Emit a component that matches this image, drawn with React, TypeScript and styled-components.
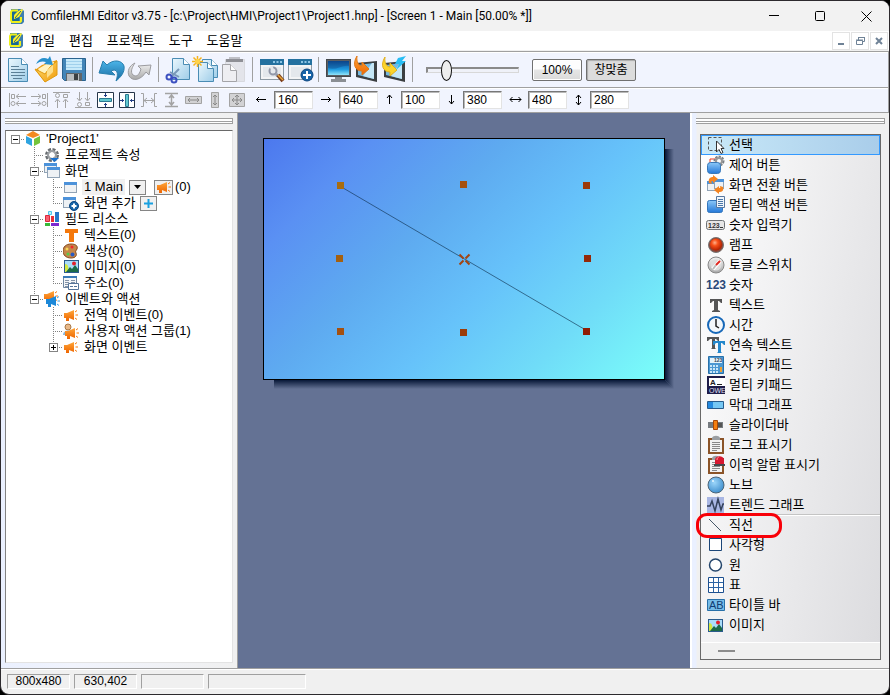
import React, { ReactNode } from 'react';
import styled, { createGlobalStyle, css } from 'styled-components';

const uiFont = '"Liberation Sans", "Noto Sans CJK KR", sans-serif';

const GlobalStyle = createGlobalStyle`
  *, *::before, *::after { box-sizing: border-box; }
  body { margin: 0; background: #000; }
  button, input { font: inherit; color: inherit; }
  button { padding: 0; border: 0; background: none; }
  ul { list-style: none; margin: 0; padding: 0; }
  svg { display: block; flex: none; }
`;

const Window = styled.div`
  height: 100vh;
  min-height: 600px;
  display: flex;
  flex-direction: column;
  border: 1px solid #2d2a2e;
  border-radius: 9px;
  overflow: hidden;
  background: #f0f0f0;
  color: #000;
  font: 13px/16px ${uiFont};
  white-space: nowrap;
`;

const TitleBar = styled.header`
  display: flex;
  align-items: center;
  height: 30px;
  flex: none;
  padding-left: 7px;
  background: #f2f2f2;
`;

const Title = styled.h1`
  flex: 1;
  min-width: 0;
  overflow: hidden;
  margin: 0 0 0 6px;
  font: 400 12px/18px Roboto, "Open Sans", sans-serif;
`;

const CaptionButton = styled.button`
  width: 46px;
  height: 30px;
  display: grid;
  place-items: center;
`;

const MenuBar = styled.nav`
  display: flex;
  align-items: center;
  height: 20px;
  flex: none;
  padding-left: 6px;
  background: #fff;
  border-bottom: 1px solid #f0f0f0;
`;

const MenuList = styled.div`
  display: flex;
  flex: 1;
  gap: 14px;
  margin-left: 7px;
`;

const MdiButton = styled.button`
  width: 18px;
  height: 18px;
  margin-right: 1px;
  display: grid;
  place-items: center;
  border: 1px solid #e3e3e3;
`;

const ToolRow = styled.div<{ $height: number; $pad: number }>`
  display: flex;
  align-items: center;
  height: ${(p) => p.$height}px;
  flex: none;
  padding-left: ${(p) => p.$pad}px;
  background: #f1f4fe;
  border-top: 1px solid #a0a0a0;
  border-right: 1px solid #a0a0a0;
  box-shadow: inset 0 1px #fff;
`;

const ToolButton = styled.button<{ $size: number }>`
  width: ${(p) => p.$size}px;
  height: ${(p) => p.$size}px;
  display: grid;
  place-items: center;
`;

const Separator = styled.span`
  width: 10px;
  height: 25px;
  display: flex;
  padding-left: 4px;
  &::before { content: ''; width: 1px; background: #a0a0a0; }
`;

const ZoomSlider = styled.input`
  appearance: none;
  width: 93px;
  height: 22px;
  margin: 0 13px 0 8px;
  background: none;
  &::-webkit-slider-runnable-track {
    height: 6px;
    background: #eff1f8;
    border: 1px solid;
    border-width: 2px 1px 1px 2px;
    border-color: #8a8a8a #d8d8d8 #d8d8d8 #8a8a8a;
  }
  &::-webkit-slider-thumb {
    appearance: none;
    width: 11px;
    height: 21px;
    margin-top: -9px;
    background: #eee;
    border: 1px solid #111;
    border-radius: 50%;
  }
`;

const PushButton = styled.button<{ $pressed?: boolean }>`
  width: 50px;
  height: 22px;
  margin-right: 4px;
  border: 1px solid #707070;
  border-radius: 2px;
  font-size: 12px;
  line-height: 18px;
  background: ${(p) => (p.$pressed ? '#dcdcdc' : 'linear-gradient(#fdfdfd 45%, #e6e6e6 50%, #dadada)')};
  box-shadow: ${(p) => (p.$pressed ? 'inset 1px 1px 1px #aaa' : 'inset 0 0 0 1px #fff')};
`;

const Field = styled.label<{ $wide?: boolean }>`
  display: flex;
  align-items: center;
  span {
    width: ${(p) => (p.$wide ? 26 : 23)}px;
    display: grid;
    place-items: center;
  }
`;

const NumberInput = styled.input`
  width: 39px;
  height: 18px;
  padding: 0 0 0 3px;
  border: 1px solid;
  border-color: #777 #e3e3e3 #e3e3e3 #777;
  box-shadow: inset 1px 1px #b8b8b8;
  background: #fff;
  font-size: 12px;
  outline: 0;
`;

const Workspace = styled.main`
  flex: 1;
  min-height: 0;
  display: grid;
  grid-template-columns: 237px minmax(0, 1fr) 199px;
  border-top: 1px solid #a0a0a0;
`;

const SidePanel = styled.aside<{ $right?: boolean }>`
  display: flex;
  flex-direction: column;
  min-height: 0;
  background: linear-gradient(90deg, #eaf0ff, #f1f4fd 30%, #f0f0f0);
  ${(p) => p.$right
    ? css`padding: 5px 8px 8px 8px; border-left: 2px solid #fff; background: linear-gradient(90deg, #eaf0ff 4px, #f0f0f0 5px);`
    : css`padding: 5px 4px 5px 4px; border-right: 1px solid #a0a0a0;`}
`;

const Gripper = styled.div<{ $wide?: boolean }>`
  height: 6px;
  flex: none;
  margin: ${(p) => (p.$wide ? '0 -4px 10px -4px' : '0 0 6px')};
  border: solid #a0a0a0;
  border-width: 1px 1px 1px 0;
  background: linear-gradient(#fff 2px, #a0a0a0 2px, #a0a0a0 3px, #fff 3px);
`;

const Tree = styled.ul`
  flex: 1;
  min-height: 0;
  overflow: hidden;
  background: #fff;
  border: 1px solid;
  border-color: #696969 #e3e3e3 #e3e3e3 #828282;
`;

const TreeRow = styled.li`
  display: flex;
  align-items: center;
  height: 16px;
`;

const dotsV = 'repeating-linear-gradient(#808080 0 1px, transparent 1px 2px)';
const dotsH = 'repeating-linear-gradient(90deg, #808080 0 1px, transparent 1px 2px)';

const Guide = styled.span<{ $kind: string }>`
  width: 19px;
  height: 16px;
  flex: none;
  display: grid;
  place-items: center;
  background-repeat: no-repeat;
  ${(p) => p.$kind === 'line' && css`background-image: ${dotsV}; background-size: 1px 16px; background-position: 9px 0;`}
  ${(p) => p.$kind === 'tee' && css`background-image: ${dotsV}, ${dotsH}; background-size: 1px 16px, 10px 1px; background-position: 9px 0, 9px 8px;`}
  ${(p) => p.$kind === 'end' && css`background-image: ${dotsV}, ${dotsH}; background-size: 1px 8px, 10px 1px; background-position: 9px 0, 9px 8px;`}
  ${(p) => p.$kind === 'root' && css`background-image: ${dotsH}; background-size: 10px 1px; background-position: 9px 8px;`}
`;

const Expander = styled.button<{ $open: boolean }>`
  width: 9px;
  height: 9px;
  margin-top: 1px;
  border: 1px solid #848484;
  background:
    linear-gradient(#000, #000) center / 5px 1px no-repeat,
    linear-gradient(#000, #000) center / 1px ${(p) => (p.$open ? 0 : 5)}px no-repeat,
    #fff;
`;

const TreeLabel = styled.span<{ $kind?: 'screen' | 'add' }>`
  margin-left: 3px;
  padding: 0 2px;
  ${(p) => p.$kind === 'screen' && css`background: #f0f0f0; margin-right: 4px;`}
  ${(p) => p.$kind === 'add' && css`margin-right: 3px;`}
`;

const RowButton = styled.button<{ $width: number }>`
  width: ${(p) => p.$width}px;
  height: 15px;
  margin-right: ${(p) => (p.$width === 17 ? 8 : 2)}px;
  display: grid;
  place-items: center;
  border: 1px solid #858585;
  background: #f0f0f0;
  overflow: hidden;
`;

const Stage = styled.section`
  min-width: 0;
  overflow: hidden;
  padding: 25px;
  background: #647294;
`;

const Screen = styled.div`
  position: relative;
  width: 402px;
  height: 242px;
  border: 1px solid #000;
  background: linear-gradient(135deg, #4c78ee 0%, #5a90f3 17%, #5eaaf0 38%, #66c2fa 58%, #70dcf8 78%, #7afffa 100%);
  &::before, &::after { content: ''; position: absolute; }
  &::before {
    top: 10px; left: 401px; width: 9px; bottom: -10px;
    background: linear-gradient(90deg, #081838, #647294);
    clip-path: polygon(0 0, 100% 0, 100% 100%, 0 calc(100% - 9px));
  }
  &::after {
    left: 10px; top: 241px; height: 9px; right: -10px;
    background: linear-gradient(#081838, #647294);
    clip-path: polygon(0 0, calc(100% - 9px) 0, 100% 100%, 0 100%);
  }
`;

const Palette = styled.div`
  flex: 1;
  min-height: 0;
  display: flex;
  flex-direction: column;
  border: 1px solid #696969;
`;

const PaletteList = styled.ul`
  flex: 1;
  min-height: 0;
  background: linear-gradient(100deg, #fff 0%, #f4f4f5 30%, #dcdcdf 100%);
  border-bottom: 1px solid #fff;
`;

const PaletteItem = styled.li<{ $divided?: boolean }>`
  position: relative;
  height: 20px;
  ${(p) => p.$divided && css`box-shadow: 0 -1px #c4c4c4, inset 0 1px #fff;`}
`;

const PaletteButton = styled.button<{ $selected: boolean }>`
  display: flex;
  align-items: center;
  gap: 3px;
  width: 100%;
  height: 20px;
  padding-left: 5px;
  ${(p) => p.$selected && css`
    padding-left: 4px;
    border: 1px solid #3399ff;
    background: linear-gradient(90deg, #c9e9f8, #a9cdea);
  `}
`;

const Ring = styled.span`
  position: absolute;
  left: -5px;
  top: -2px;
  width: 86px;
  height: 25px;
  border: 3px solid #f80008;
  border-radius: 11px;
  pointer-events: none;
`;

const PaletteFooter = styled.div`
  height: 16px;
  flex: none;
  display: flex;
  align-items: center;
  padding-left: 17px;
  background: #f0f0f0;
  &::before { content: ''; width: 17px; height: 2px; background: #8c8c8c; }
`;

const StatusBar = styled.footer`
  display: flex;
  align-items: center;
  height: 26px;
  flex: none;
  gap: 4px;
  padding: 0 6px;
  border-top: 1px solid #a0a0a0;
  box-shadow: inset 0 1px #fff;
`;

const StatusCell = styled.span<{ $wide?: boolean }>`
  width: ${(p) => (p.$wide ? 98 : 63)}px;
  height: 15px;
  border: 1px solid;
  border-color: #a0a0a0 #fff #fff #a0a0a0;
  text-align: center;
  font-size: 12px;
  line-height: 12px;
`;

/* ---------- drawings ---------- */

const HiddenSvg = styled.svg`
  position: absolute;
`;

const Svg = ({ s = 20, h, children }: { s?: number; h?: number; children: ReactNode }) => (
  <svg width={s} height={h ?? s} viewBox={`0 0 ${s} ${h ?? s}`} fill="none" aria-hidden="true">{children}</svg>
);

const Gradients = () => (
  <HiddenSvg width="0" height="0" aria-hidden="true">
    <defs>
      <linearGradient id="page" x1="0" y1="0" x2="1" y2="1"><stop stopColor="#eaf7fd" /><stop offset="1" stopColor="#9fcde8" /></linearGradient>
      <linearGradient id="blue" x1="0" y1="0" x2="0" y2="1"><stop stopColor="#8cc8f8" /><stop offset="1" stopColor="#2478d8" /></linearGradient>
      <linearGradient id="deep" x1="0" y1="0" x2="0" y2="1"><stop stopColor="#4ab4e8" /><stop offset="1" stopColor="#1a6aa0" /></linearGradient>
      <linearGradient id="gray" x1="0" y1="0" x2="0" y2="1"><stop stopColor="#f4f4f4" /><stop offset="1" stopColor="#a8a8a8" /></linearGradient>
      <linearGradient id="gold" x1="0" y1="0" x2="1" y2="1"><stop stopColor="#ffe27a" /><stop offset="1" stopColor="#f09a08" /></linearGradient>
      <linearGradient id="orange" x1="0" y1="0" x2="0" y2="1"><stop stopColor="#ffa63a" /><stop offset="1" stopColor="#ee6500" /></linearGradient>
      <linearGradient id="screen" x1="0" y1="0" x2="0" y2="1"><stop stopColor="#0a4a96" /><stop offset=".6" stopColor="#1e9ae0" /><stop offset="1" stopColor="#8fe4fa" /></linearGradient>
      <radialGradient id="lamp" cx=".4" cy=".35" r=".65"><stop stopColor="#ffb08a" /><stop offset=".4" stopColor="#f85018" /><stop offset="1" stopColor="#b02000" /></radialGradient>
      <radialGradient id="knob" cx=".4" cy=".35" r=".7"><stop stopColor="#9cd6fa" /><stop offset="1" stopColor="#3c8ccc" /></radialGradient>
    </defs>
  </HiddenSvg>
);

const Logo = () => (
  <Svg s={17}>
    <path d="M3 1h11l2 2v11l-2 2H3z" fill="#3d7fae" />
    <path d="M3 3h8v11H3z" fill="#1a6a92" />
    <path d="M10 2.500H4L3 4v8.500l1 1.500h8l1-1V9" stroke="#eef01a" strokeWidth="2" />
    <path d="M6 8c0-2 4-5 8-7l1 1-4 7-5 2z" fill="#fff22a" />
    <path d="m7 10 6-7" stroke="#25607a" />
  </Svg>
);

const Megaphone = ({ x = 0, y = 0, blue }: { x?: number; y?: number; blue?: boolean }) => (
  <g transform={`translate(${x} ${y})`}>
    <path d="M0 5h3l7-3v10l-5-2v3H2v-3H0z" fill={blue ? '#1c88d8' : 'url(#orange)'} />
    <path d="m11 4 2-1.500M11.500 7H14M11 10l2 1.500" stroke={blue ? '#3aa0e4' : '#f47a10'} />
  </g>
);

const WindowShape = ({ x, y, w, h }: { x: number; y: number; w: number; h: number }) => (
  <g>
    <rect x={x + 0.5} y={y + 0.5} width={w} height={h} fill="#eef1f4" stroke="#91a3b5" />
    <path d={`M${x} ${y}h${w + 1}v3h-${w + 1}z`} fill="#4c92da" />
  </g>
);

const PlusDisc = ({ cx, cy, r }: { cx: number; cy: number; r: number }) => (
  <g>
    <circle cx={cx} cy={cy} r={r} fill="#1764a8" stroke="#0c4680" />
    <path d={`M${cx - r + 2} ${cy}h${r * 2 - 4}M${cx} ${cy - r + 2}v${r * 2 - 4}`} stroke="#fff" strokeWidth="2" />
  </g>
);

const Picture = ({ x = 1, y = 3 }: { x?: number; y?: number }) => (
  <g transform={`translate(${x} ${y})`}>
    <rect x=".5" y=".5" width="14" height="12" fill="#a9dcfa" stroke="#2b5b8c" />
    <path d="M1 4c3 0 4 3 3 8H1z" fill="#d2e840" />
    <path d="m2 12 4-5 2 2 3-4 3 4v3z" fill="#1b6a48" />
    <circle cx="10" cy="3.500" r="2" fill="#e2202c" />
  </g>
);

const BlankPage = ({ x, y, w = 17, h = 22, gray }: { x: number; y: number; w?: number; h?: number; gray?: boolean }) => (
  <g transform={`translate(${x} ${y})`}>
    <path d={`M.5.5h${w - 7}l6 6v${h - 7}h-${w - 1}z`} fill={gray ? '#eeeef2' : 'url(#page)'} stroke={gray ? '#a4a4a8' : '#4a8cb4'} />
    <path d={`M${w - 6.5} .5v6h6`} fill="#fff" stroke={gray ? '#a4a4a8' : '#4a8cb4'} />
  </g>
);

const AppFrame = () => (
  <g>
    <rect x="2.500" y="3.500" width="23" height="20" fill="#f3f4f5" stroke="#8d9aa4" />
    <path d="M2 3h24v6H2z" fill="#24719f" />
    <path d="M15 5h2v2h-2zM18.500 5h2v2h-2zM22 5h2v2h-2z" fill="#8cc4e4" />
    <path d="M5 11h18v10H5z" fill="#e4e8ec" />
  </g>
);

const Tablet = () => (
  <g>
    <path d="M4 7 25 5v21L4 21z" fill="#3b3f42" />
    <path d="m6 9 16-2v16L6 19z" fill="#75b8e0" />
    <path d="M11 20 20 7l2 0v16z" fill="#c4e6f6" />
  </g>
);

const bigIcons: Record<string, ReactNode> = {
  doc: <><BlankPage x={4} y={2} w={20} h={24} /><path d="M7 10.500h8M7 13.500h14M7 16.500h14M7 19.500h14M9 22.500h9" stroke="#5b7f96" /></>,
  open: <><path d="m3 14 7-5 15-5v14L13 26z" fill="#e89c10" /><path d="m6 13 10-6 6-1v12l-9 6z" fill="#fff3c0" /><path d="m3 13 10 5 5-7 7-6v14L13 26z" fill="url(#gold)" stroke="#e09a10" /><path d="m15 14 6-5v7l-6 6z" fill="#fff0b0" opacity=".7" /><path d="M4 8c3-6 8-7 12-5l2-3 3 9-9-1 2-2c-3-1-6-1-10 2z" fill="#2890cc" /></>,
  save: <><path d="M2.500 2.500h23v22h-21l-2-2z" fill="#4385b8" stroke="#2a638f" /><path d="M6 3h16v11H6z" fill="#c8eafa" /><path d="M6 5.500h16M6 8.500h16M6 11.500h16" stroke="#a0d0ec" /><path d="M6 17h16v8H6z" fill="#606568" /><path d="M7 18h12v7H7z" fill="#b9bdc0" /><path d="M14 18h4v6h-4z" fill="#3b3f42" /></>,
  undo: <path d="m1 17 4-12 4 4c6-6 15-5 17 1 1 6-3 11-8 15 3-8 1-13-5-10l4 4z" fill="url(#deep)" stroke="#287fae" />,
  redo: <path d="m25 9-13 1 3 3c-2 7-5 8-8 6C4 16 6 11 9 7 3 10 1 15 3 20c4 6 12 4 17-4l3 3z" fill="url(#gray)" stroke="#9b9b9f" />,
  cut: <><BlankPage x={8} y={2} w={18} h={22} /><path d="m15 13-7 7M6 16l9 5" stroke="#7a98b8" strokeWidth="2" /><circle cx="5" cy="21" r="2.500" stroke="#3c50c0" strokeWidth="2" /><circle cx="10" cy="24" r="2.500" stroke="#3c50c0" strokeWidth="2" /></>,
  copy: <><BlankPage x={10} y={3} w={16} h={19} /><BlankPage x={6} y={6} w={16} h={20} /><path d="M5.500 0v11M0 5.500h11M1.500 1.500l8 8M9.500 1.500l-8 8" stroke="#f6b21c" strokeWidth="1.500" /><circle cx="5.500" cy="5.500" r="2.500" fill="#ffd34a" /></>,
  paste: <><path d="M5.500 3.500h19v22h-19z" fill="#e3e4ea" stroke="#d8d9de" /><path d="M6 3h3V1h11v2h3v3H6z" fill="#8f9096" /><path d="M9 1h11v2H9z" fill="#bfc0c6" /><BlankPage x={2} y={8} w={15} h={18} gray /></>,
  props: <><AppFrame /><circle cx="15" cy="15" r="3.500" stroke="#9298a8" strokeWidth="2" /><path d="m13 10 1.500 4" stroke="#e4e8ec" strokeWidth="3" /><path d="m18 18 2 2" stroke="#9298a8" strokeWidth="3" /><path d="m20 19 5 6" stroke="#7a3c1c" strokeWidth="4" /><path d="m20 19 5 5" stroke="#e8a838" strokeWidth="1.500" /></>,
  add: <><AppFrame /><PlusDisc cx={21} cy={19} r={6} /></>,
  monitor: <><rect x="2.500" y="3.500" width="24" height="17" fill="#5a5e64" stroke="#44484c" /><path d="M4 5h21v14H4z" fill="url(#screen)" /><path d="M4 12c8 3 15-4 21-2V5H4z" fill="#0d3d78" opacity=".35" /><path d="M11 21h7v2h4v3H7v-3h4z" fill="#8b8f94" /></>,
  send: <><Tablet /><path d="M5 0c-5 8-2 15 5 15v4l7-6-7-7v4C7 10 4 6 5 0z" fill="url(#orange)" stroke="#e07818" /></>,
  flash: <><Tablet /><path d="M5 1c-5 8-2 15 5 15v4l7-6-7-7v4C7 11 4 7 5 1z" fill="#fcd42a" stroke="#e0b020" /><path d="m18 2 8-2-4 5h4l-10 9 3-6h-4z" fill="#28bdf4" /></>,
};

const g = '#a3a3a3';
const alignIcons: Record<string, ReactNode> = {
  left: <><path d="M2.500 3v14M10 6.500h9M12 4l-3 2.500L12 9M10 13.500h9M12 11l-3 2.500 3 2.500" stroke={g} /><path d="M4.500 4.500h3v4h-3z" stroke={g} /><circle cx="6" cy="13.500" r="2" stroke={g} /></>,
  right: <><path d="M18.500 3v14M2 6.500h9M9 4l3 2.500L9 9M2 13.500h9M9 11l3 2.500L9 16" stroke={g} /><path d="M13.500 4.500h3v4h-3z" stroke={g} /><circle cx="15" cy="13.500" r="2" stroke={g} /></>,
  top: <><path d="M2 2.500h17M6.500 10v8M4 12l2.500-3L9 12M14.500 10v8M12 12l2.500-3 2.500 3" stroke={g} /><circle cx="6.500" cy="5.500" r="2" stroke={g} /><path d="M12.500 4.500h4v3h-4z" stroke={g} /></>,
  bottom: <><path d="M2 17.500h17M6.500 2v8M4 8l2.500 3L9 8M14.500 2v8M12 8l2.500 3L17 8" stroke={g} /><circle cx="6.500" cy="14.500" r="2" stroke={g} /><path d="M12.500 12.500h4v3h-4z" stroke={g} /></>,
  midH: <><path d="M2.500 2.500h16v15h-16z" fill="#fff" stroke="#26364a" /><path d="M4.500 8.500h12v3h-12z" fill="#62c8d0" stroke="#2a7890" /><path d="M10.500 3v4M10.500 13v4M9 5.500h3M9 14.500h3" stroke="#203c84" /></>,
  midV: <><path d="M2.500 2.500h15v15h-15z" fill="#fff" stroke="#26364a" /><path d="M8.500 4.500h3v12h-3z" fill="#62c8d0" stroke="#2a7890" /><path d="M3 10.500h4M13 10.500h4M5.500 9v3M14.500 9v3" stroke="#203c84" /></>,
  spaceH: <path d="M2 3.500h2.500v13H2M18 3.500h-2.500v13H18M5 10.500h10M8 8l-3 2.500L8 13M12 8l3 2.500-3 2.500" stroke={g} />,
  spaceV: <path d="M4 3.500h13M4 16.500h13M10.500 5v10M8 8l2.500-3L13 8M8 12l2.500 3 2.500-3" stroke={g} strokeWidth="1.500" />,
  sameW: <><path d="M2.500 6.500h16v7h-16z" fill="#d2d2d4" stroke={g} /><path d="M5 10h11M7 8l-2 2 2 2M14 8l2 2-2 2" stroke="#888" /></>,
  sameH: <><path d="M6.500 2.500h7v15h-7z" fill="#d2d2d4" stroke={g} /><path d="M10 5v10M8 7l2-2 2 2M8 13l2 2 2-2" stroke="#888" /></>,
  same: <><path d="M2.500 3.500h15v13h-15z" fill="#d2d2d4" stroke={g} /><path d="M10 5v10M5 10h10M8 7l2-2 2 2M8 13l2 2 2-2M7 8l-2 2 2 2M13 8l2 2-2 2" stroke="#888" /></>,
};

const arrowPaths: Record<string, string> = {
  왼쪽: 'M1 5.500h10M4 3 1.500 5.500 4 8',
  오른쪽: 'M1 5.500h10M8 3l2.500 2.500L8 8',
  위: 'M6.500 1v9M4 4l2.500-3L9 4',
  아래: 'M6.500 1v9M4 7l2.500 3L9 7',
  너비: 'M1 5.500h11M3.500 3 1 5.500 3.500 8M9.500 3 12 5.500 9.500 8',
  높이: 'M6.500 1v10M4 4l2.500-3L9 4M4 8l2.500 3L9 8',
};

const treeIcons: Record<string, ReactNode> = {
  project: <><path d="m8 0 7 4-7 3-7-3z" fill="#f28a20" /><path d="m1 5 6 3v7l-6-3z" fill="#2fa4e0" /><path d="m15 5-6 3v7l6-3z" fill="#74c43c" /></>,
  gear: <><circle cx="8" cy="8" r="5" stroke="#686c70" strokeWidth="4" strokeDasharray="2.600 1.300" /><circle cx="8" cy="8" r="4" stroke="#9a9ea2" strokeWidth="2" /><path d="M6 11h9l-4.500 4z" fill="#1a70cc" /></>,
  screens: <><WindowShape x={0} y={0} w={12} h={9} /><WindowShape x={3} y={4} w={12} h={10} /></>,
  screen: <WindowShape x={1} y={3} w={12} h={10} />,
  addScreen: <><WindowShape x={0} y={2} w={12} h={10} /><PlusDisc cx={11} cy={11} r={4.5} /></>,
  resources: <><path d="M4.500.5h3v3h-3z" fill="#bff0fa" stroke="#4ec8ea" /><path d="M1.500 4.500h4v6h-4z" fill="#f86070" stroke="#d8283c" /><path d="M7 5h3v6H7z" fill="#e83038" /><path d="M11 1h4v10h-4z" fill="#2878c8" /><path d="M1 12h5v3H1z" fill="#38b838" /><path d="M7 12h8v3H7z" fill="#7c28d0" /></>,
  text: <path d="M2 2h13v4h-4v9H6V6H2z" fill="#f4780c" />,
  color: <><path d="M8 1c5 0 7 2 6 5-1 2-2 2-1 4s0 5-5 5-8-3-8-7 3-7 8-7z" fill="#c5864a" stroke="#83481c" /><circle cx="9" cy="4" r="1.500" fill="#f02828" /><circle cx="4" cy="6" r="1.500" fill="#f8d858" /><circle cx="5" cy="11" r="1.500" fill="#58c848" /><circle cx="9.500" cy="11.500" r="2" fill="#2858c0" /></>,
  image: <Picture x={1} y={1} />,
  address: <><path d="M.5 1.500h13v11H.5z" fill="#f4f6f8" stroke="#6f86a0" /><path d="M0 1h14v2H0z" fill="#3979b8" /><path d="M2 5.500h4M8 5.500h4M2 7.500h4M8 7.500h4M2 9.500h4M2 11.500h4" stroke="#8393a8" /><path d="M5.500 8.500h10v6h-10z" fill="#fff" stroke="#56759a" /><path d="M7 11.500h3M11 11.500h3" stroke="#56759a" /></>,
  events: <><Megaphone x={0} y={-2} /><Megaphone x={2} y={3} blue /></>,
  event: <Megaphone x={1} y={1} />,
  userEvent: <><circle cx="5" cy="4" r="3" fill="#e8b888" stroke="#a87848" /><path d="M0 12c0-6 10-6 10 0z" fill="#8ab8dc" /><Megaphone x={2} y={3} /></>,
};

const Clipboard = () => (
  <g>
    <path d="M2 3h16v16H2z" fill="#8b5428" />
    <path d="M4 5h12v12H4z" fill="#f3f3f3" />
    <path d="M6 3c1-3 7-3 8 0v2H6z" fill="#9a9ea2" />
    <path d="M6 7.500h8M6 9.500h8M6 11.500h8M6 13.500h8M6 15.500h5" stroke="#8a8a8a" />
  </g>
);

const iconText = (x: number, y: number, size: number, fill: string, value: string) => (
  <text x={x} y={y} fontSize={size} fontWeight="700" fontFamily="Liberation Sans" fill={fill}>{value}</text>
);

const paletteIcons: Record<string, ReactNode> = {
  select: <><path d="M2.500 2.500h13v13h-13z" stroke="#555" strokeDasharray="3 2" /><path d="m10.500 6 0 11 2.500-2.500 2 4 2-1-2-4h3z" fill="#fff" stroke="#333" /></>,
  control: <><path d="M4 4h6v6H4z" stroke="#e83820" /><circle cx="13" cy="6" r="4" stroke="#7b7f83" strokeWidth="3" strokeDasharray="2 1" /><circle cx="13" cy="6" r="3" stroke="#999" strokeWidth="2" /><rect x="1.500" y="7.500" width="13" height="11" rx="3" fill="url(#blue)" stroke="#3978b8" /></>,
  change: <><WindowShape x={1} y={6} w={10} h={9} /><WindowShape x={8} y={4} w={9} h={9} /><path d="M3 8c-1-4 1-6 4-6V0l5 4-5 4V6C5 6 5 7 6 9zM17 12c1 4-1 5-4 5v2l-5-4 5-4v2c2 0 1-1 1-2z" fill="#f48420" /></>,
  multi: <><rect x="1.500" y="5.500" width="15" height="12" rx="2" fill="url(#blue)" stroke="#3476bc" /><path d="M10.500 1.500h8v11h-8z" fill="#f0f6fc" stroke="#5878a0" /><path d="M12 4.500h5M12 6.500h5M12 8.500h5M12 10.500h5" stroke="#4c78a8" /></>,
  numInput: <><rect x=".5" y="5.500" width="18" height="9" rx="2" fill="#e6e6e6" stroke="#6e7276" />{iconText(2, 13, 7, '#333', '123')}<path d="M14 12.500h3" stroke="#333" /></>,
  lamp: <><circle cx="10" cy="10" r="7.500" fill="#8e4638" stroke="#777" /><circle cx="10" cy="9.500" r="6" fill="url(#lamp)" /></>,
  toggle: <><circle cx="10" cy="10" r="8" fill="url(#gray)" stroke="#888" /><circle cx="10" cy="10" r="5.500" fill="#ddd" /><path d="m7 14 7-8" stroke="#fff" strokeWidth="4" /><path d="m7 14 3-4" stroke="#bbb" strokeWidth="2" /><path d="m10 10 4-4" stroke="#e02820" strokeWidth="2" /></>,
  number: iconText(0, 14, 12, '#2a4878', '123'),
  text: <path d="M4 4h12v4h-1l-2-2h-1v9l2 1v1H6v-1l2-1V6H7L5 8H4z" fill="#555" />,
  clock: <><circle cx="10" cy="10" r="8" fill="#f3f7fa" stroke="#1768b8" strokeWidth="2" /><path d="M10 4v7l3 2" stroke="#222" strokeWidth="1.500" /></>,
  texts: <><path d="M1 2h12v4h-1l-2-2H9v9l1 1H5l1-1V4H4L2 6H1z" fill="#555" /><path d="M7 6h12v4h-1l-2-2h-1v9l1 1h-5l1-1V8h-2l-2 2H7z" fill="#2488cc" /></>,
  keypad: <><path d="M2.500 1.500h15v17h-15z" fill="#4b98d2" stroke="#2870a8" /><path d="M4 3h12v5H4z" fill="#e4f3fb" />{iconText(8, 7, 5, '#345', '123')}<path d="M4 11h9M4 14h9M4 17h9" stroke="#c8e6f8" strokeWidth="2" strokeDasharray="2 1" /><path d="M14 12h2v5h-2z" fill="#f0a030" /></>,
  multiKeypad: <><path d="M1 1h18v18H1z" fill="#1e1c48" /><path d="M3 3h16v8H3z" fill="#fff" />{iconText(4, 10, 8, '#222', 'A')}<path d="M11 9.500h5" stroke="#222" /><text x="3" y="18" fontSize="7" fontFamily="Liberation Sans" fill="#e0e0f0">OWE</text></>,
  bar: <><path d="M1.500 6.500h16v7h-16z" fill="#76c8f4" stroke="#285c8c" /><path d="M2 7h5v6H2z" fill="#248ae0" /></>,
  slider: <><path d="M2 7h15v6H2z" fill="#777c80" /><path d="M12 8h4v4h-4z" fill="#555" /><path d="M7.500 5.500h4v9h-4z" fill="#f68010" stroke="#a84808" /></>,
  log: <Clipboard />,
  alarm: <><Clipboard /><path d="M9 10V5c0-5 9-5 9 0v5z" fill="#d81830" /><path d="M8 9h11v2H8z" fill="#46484c" /><path d="M11 5c0-2 1-3 2-3" stroke="#ff9898" /></>,
  knob: <><circle cx="10" cy="10" r="8" fill="url(#knob)" stroke="#4a6478" /><circle cx="7" cy="6" r="1" fill="#e8f8ff" /></>,
  trend: <><path d="M1 2h17v17H1z" fill="#a9b7e4" /><path d="M1 11h3l2-5 3 10 3-12 3 11 2-6h1" stroke="#34425c" strokeWidth="1.500" /></>,
  line: <path d="m3 4 12 12" stroke="#465868" />,
  rect: <path d="M3.500 3.500h12v12h-12z" fill="#fff" stroke="#1c4678" />,
  circle: <circle cx="9.500" cy="10" r="6" fill="#fff" stroke="#24466c" strokeWidth="1.500" />,
  table: <><path d="M2.500 2.500h15v15h-15z" fill="#fff" stroke="#1c5090" /><path d="M7.500 3v14M12.500 3v14M3 7.500h14M3 12.500h14" stroke="#2c64a4" /></>,
  titleBar: <><path d="M1.500 4.500h17v11h-17z" fill="#76bce8" stroke="#2870a8" /><text x="3" y="14" fontSize="11" fontFamily="Liberation Sans" fill="#103c74">AB</text></>,
  image: <Picture x={2} y={4} />,
};

/* ---------- data ---------- */

const toolGroups: [string, string][][] = [
  [['doc', '새로 만들기'], ['open', '열기'], ['save', '저장']],
  [['undo', '실행 취소'], ['redo', '다시 실행']],
  [['cut', '잘라내기'], ['copy', '복사'], ['paste', '붙여넣기']],
  [['props', '화면 속성'], ['add', '화면 추가']],
  [['monitor', '시뮬레이션'], ['send', '전송'], ['flash', '빠른 전송']],
];

const fields: [string, string, boolean][] = [
  ['왼쪽', '160', true], ['오른쪽', '640', true], ['위', '100', false],
  ['아래', '380', false], ['너비', '480', true], ['높이', '280', false],
];

type Node = { guides: string[]; open?: boolean; icon: string; label: string; extra?: 'screen' | 'add' };

const nodes: Node[] = [
  { guides: ['root'], open: true, icon: 'project', label: "'Project1'" },
  { guides: ['', 'tee'], icon: 'gear', label: '프로젝트 속성' },
  { guides: ['', 'tee'], open: true, icon: 'screens', label: '화면' },
  { guides: ['', 'line', 'tee'], icon: 'screen', label: '1 Main', extra: 'screen' },
  { guides: ['', 'line', 'end'], icon: 'addScreen', label: '화면 추가', extra: 'add' },
  { guides: ['', 'tee'], open: true, icon: 'resources', label: '필드 리소스' },
  { guides: ['', 'line', 'tee'], icon: 'text', label: '텍스트(0)' },
  { guides: ['', 'line', 'tee'], icon: 'color', label: '색상(0)' },
  { guides: ['', 'line', 'tee'], icon: 'image', label: '이미지(0)' },
  { guides: ['', 'line', 'end'], icon: 'address', label: '주소(0)' },
  { guides: ['', 'end'], open: true, icon: 'events', label: '이벤트와 액션' },
  { guides: ['', '', 'tee'], icon: 'event', label: '전역 이벤트(0)' },
  { guides: ['', '', 'tee'], icon: 'userEvent', label: '사용자 액션 그룹(1)' },
  { guides: ['', '', 'end'], open: false, icon: 'event', label: '화면 이벤트' },
];

const tools: [string, string][] = [
  ['select', '선택'], ['control', '제어 버튼'], ['change', '화면 전환 버튼'], ['multi', '멀티 액션 버튼'],
  ['numInput', '숫자 입력기'], ['lamp', '램프'], ['toggle', '토글 스위치'], ['number', '숫자'],
  ['text', '텍스트'], ['clock', '시간'], ['texts', '연속 텍스트'], ['keypad', '숫자 키패드'],
  ['multiKeypad', '멀티 키패드'], ['bar', '막대 그래프'], ['slider', '슬라이더바'], ['log', '로그 표시기'],
  ['alarm', '이력 알람 표시기'], ['knob', '노브'], ['trend', '트렌드 그래프'], ['line', '직선'],
  ['rect', '사각형'], ['circle', '원'], ['table', '표'], ['titleBar', '타이틀 바'], ['image', '이미지'],
];

const handles: [number, number, string][] = [
  [73, 43, '#a86c10'], [196, 42, '#a45010'], [319, 43, '#9c3808'],
  [72, 116, '#a46010'], [320, 116, '#942808'],
  [73, 189, '#a45010'], [196, 190, '#9c3c08'], [319, 189, '#901c04'],
];

const TreeNode = ({ node }: { node: Node }) => (
  <TreeRow>
    {node.guides.map((kind, i) => (
      <Guide key={i} $kind={kind}>
        {node.open !== undefined && i === node.guides.length - 1 && (
          <Expander $open={node.open} aria-label={node.label} aria-expanded={node.open} />
        )}
      </Guide>
    ))}
    <Svg s={16}>{treeIcons[node.icon]}</Svg>
    <TreeLabel $kind={node.extra}>{node.label}</TreeLabel>
    {node.extra === 'screen' && (
      <>
        <RowButton $width={17} aria-label="화면 메뉴"><Svg s={9} h={5}><path d="M1 0h7L4.500 4z" fill="#000" /></Svg></RowButton>
        <RowButton $width={19} aria-label="화면 이벤트"><Svg s={15} h={13}><Megaphone x={1} y={-1} /></Svg></RowButton>
        <span>(0)</span>
      </>
    )}
    {node.extra === 'add' && (
      <RowButton $width={17} aria-label="화면 추가"><Svg s={9}><path d="M0 4.500h9M4.500 0v9" stroke="#18a0e0" strokeWidth="2" /></Svg></RowButton>
    )}
  </TreeRow>
);

export default function App() {
  return (
    <>
      <GlobalStyle />
      <Gradients />
      <Window>
        <TitleBar>
          <Logo />
          <Title>ComfileHMI Editor v3.75 - [c:\Project\HMI\Project1\Project1.hnp] - [Screen 1 - Main [50.00% *]]</Title>
          <CaptionButton aria-label="최소화"><Svg s={10}><path d="M0 4.500h10" stroke="#000" /></Svg></CaptionButton>
          <CaptionButton aria-label="최대화"><Svg s={11}><rect x=".5" y=".5" width="9" height="9" rx="1" stroke="#000" /></Svg></CaptionButton>
          <CaptionButton aria-label="닫기"><Svg s={11}><path d="m.5.5 10 10M10.500.5l-10 10" stroke="#000" /></Svg></CaptionButton>
        </TitleBar>

        <MenuBar>
          <Logo />
          <MenuList>
            {['파일', '편집', '프로젝트', '도구', '도움말'].map((m) => <button key={m}>{m}</button>)}
          </MenuList>
          <MdiButton aria-label="창 최소화"><Svg s={12}><path d="M3 9h6" stroke="#6f8296" strokeWidth="2" /></Svg></MdiButton>
          <MdiButton aria-label="창 복원"><Svg s={12}><path d="M2.500 5.500h6v4h-6zM4.500 5V2.500h6v4H9M2 5h7M4 2.500h7" stroke="#6f8296" /></Svg></MdiButton>
          <MdiButton aria-label="창 닫기"><Svg s={12}><path d="m3 3 6 6M9 3 3 9" stroke="#6f8296" strokeWidth="2" /></Svg></MdiButton>
        </MenuBar>

        <ToolRow $height={36} $pad={3}>
          {toolGroups.map((group, i) => (
            <React.Fragment key={i}>
              {group.map(([id, label]) => (
                <ToolButton key={id} $size={28} aria-label={label}><Svg s={28}>{bigIcons[id]}</Svg></ToolButton>
              ))}
              <Separator />
            </React.Fragment>
          ))}
          <ZoomSlider type="range" min={0} max={100} defaultValue={17} aria-label="확대 비율" />
          <PushButton>100%</PushButton>
          <PushButton $pressed>창맞춤</PushButton>
        </ToolRow>

        <ToolRow $height={25} $pad={5}>
          {Object.entries(alignIcons).map(([id, drawing]) => (
            <ToolButton key={id} $size={22} aria-label={id}><Svg s={20}>{drawing}</Svg></ToolButton>
          ))}
          {fields.map(([label, value, wide]) => (
            <Field key={label} $wide={wide}>
              <span><Svg s={13}><path d={arrowPaths[label]} stroke="#000" /></Svg></span>
              <NumberInput defaultValue={value} aria-label={label} />
            </Field>
          ))}
        </ToolRow>

        <Workspace>
          <SidePanel>
            <Gripper />
            <Tree>{nodes.map((n) => <TreeNode key={n.label + n.guides.length} node={n} />)}</Tree>
          </SidePanel>

          <Stage>
            <Screen>
              <svg width="400" height="240" viewBox="0 0 400 240" aria-hidden="true">
                <path d="M80 49.500 320 190" stroke="#0c2c48" strokeOpacity=".6" />
                {handles.map(([x, y, fill]) => <rect key={`${x}-${y}`} x={x} y={y} width="7" height="7" fill={fill} />)}
                <path d="m195.500 115.500 4 4M205.500 115.500l-4 4M195.500 125.500l4-4M205.500 125.500l-4-4" stroke="#a44410" strokeWidth="2" />
              </svg>
            </Screen>
          </Stage>

          <SidePanel $right>
            <Gripper $wide />
            <Palette>
              <PaletteList>
                {tools.map(([id, label]) => (
                  <PaletteItem key={id} $divided={id === 'line'}>
                    <PaletteButton $selected={id === 'select'}>
                      <Svg s={20}>{paletteIcons[id]}</Svg>
                      {label}
                    </PaletteButton>
                    {id === 'line' && <Ring />}
                  </PaletteItem>
                ))}
              </PaletteList>
              <PaletteFooter />
            </Palette>
          </SidePanel>
        </Workspace>

        <StatusBar>
          <StatusCell>800x480</StatusCell>
          <StatusCell>630,402</StatusCell>
          <StatusCell />
          <StatusCell $wide />
        </StatusBar>
      </Window>
    </>
  );
}
